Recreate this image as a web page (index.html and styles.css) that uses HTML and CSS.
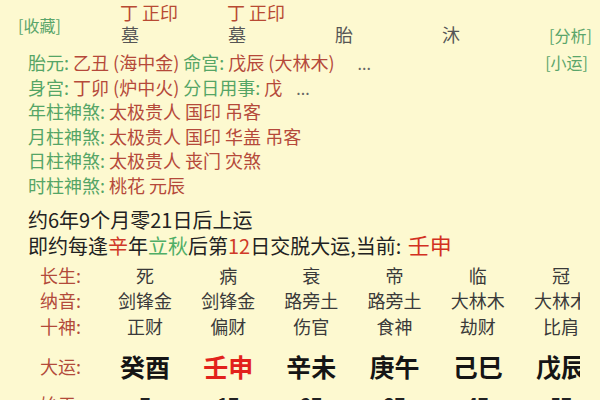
FILE: index.html
```html
<!DOCTYPE html>
<html lang="zh">
<head>
<meta charset="utf-8">
<link rel="stylesheet" href="styles.css">
</head>
<body>
<div class="page">
  <div class="pillars">
    <div class="side fav">[收藏]</div>
    <div class="god">丁 正印</div>
    <div class="god">丁 正印</div>
    <div class="god"></div>
    <div class="god"></div>
    <div class="stage">墓</div>
    <div class="stage">墓</div>
    <div class="stage">胎</div>
    <div class="stage">沐</div>
    <div class="side link">[分析]</div>
  </div>

  <div class="info">
    <div class="row"><span class="side right">[小运]</span><span class="k">胎元: </span><span class="v">乙丑 (海中金) </span><span class="k">命宫: </span><span class="v">戊辰 (大林木)</span><span class="dots d1">...</span></div>
    <div class="row"><span class="k">身宫: </span><span class="v">丁卯 (炉中火) </span><span class="k">分日用事: </span><span class="v">戊</span><span class="dots d2">...</span></div>
    <div class="row"><span class="k">年柱神煞: </span><span class="v">太极贵人 国印 吊客</span></div>
    <div class="row"><span class="k">月柱神煞: </span><span class="v">太极贵人 国印 华盖 吊客</span></div>
    <div class="row"><span class="k">日柱神煞: </span><span class="v">太极贵人 丧门 灾煞</span></div>
    <div class="row"><span class="k">时柱神煞: </span><span class="v">桃花 元辰</span></div>
  </div>

  <div class="luck">
    <div class="line">约6年9个月零21日后上运</div>
    <div class="line">即约每逢<span class="red">辛</span>年<span class="green">立秋</span>后第<span class="red">12</span>日交脱大运,当前: <span class="cur">壬申</span></div>
  </div>

  <div class="table">
    <div class="lbl">长生:</div>
    <div class="cell">死</div><div class="cell">病</div><div class="cell">衰</div><div class="cell">帝</div><div class="cell">临</div><div class="cell">冠</div>
    <div class="lbl">纳音:</div>
    <div class="cell">剑锋金</div><div class="cell">剑锋金</div><div class="cell">路旁土</div><div class="cell">路旁土</div><div class="cell">大林木</div><div class="cell">大林木</div>
    <div class="lbl">十神:</div>
    <div class="cell">正财</div><div class="cell">偏财</div><div class="cell">伤官</div><div class="cell">食神</div><div class="cell">劫财</div><div class="cell">比肩</div>
    <div class="lbl">大运:</div>
    <div class="cell big">癸酉</div><div class="cell big now">壬申</div><div class="cell big">辛未</div><div class="cell big">庚午</div><div class="cell big">己巳</div><div class="cell big">戊辰</div>
    <div class="lbl">始于:</div>
    <div class="cell age">7</div><div class="cell age">17</div><div class="cell age">27</div><div class="cell age">37</div><div class="cell age">47</div><div class="cell age">57</div>
  </div>
</div>
</body>
</html>
```

FILE: styles.css
```css
html, body {
  margin: 0;
  padding: 0;
  background: #fdf9d0;
}
body {
  width: 600px;
  height: 400px;
  overflow: hidden;
  font-family: "Noto Sans CJK SC", "Noto Sans", sans-serif;
  font-size: 18px;
  color: #333;
}
.page {
  width: 600px;
}
.pillars {
  display: grid;
  grid-template-columns: 120px 107px 107px 107px 107px 1fr;
  grid-template-rows: 23px 23px;
  align-items: center;
}
.fav {
  grid-row: 1 / 3;
  grid-column: 1;
  padding-left: 18px;
  align-self: center;
  padding-top: 3px;
}
.side {
  font-size: 16px;
  color: #5aa56a;
}
.link {
  grid-column: 6;
  grid-row: 2;
  padding-left: 1px;
}
.god {
  color: #b84a33;
  grid-row: 1;
  white-space: pre;
  line-height: 22px;
  padding-top: 1px;
}
.stage {
  color: #555;
  grid-row: 2;
  padding-left: 1px;
  line-height: 23px;
}
.info {
  padding-top: 4px;
  padding-left: 28px;
}
.row {
  line-height: 24.6px;
  height: 24.6px;
  white-space: pre;
}
.k { color: #55a566; }
.v { color: #b5493a; }
.dots { color: #666; font-size: 16px; }
.d1 { margin-left: 23px; }
.d2 { margin-left: 14px; }
.right { float: right; margin-right: 12px; }
.luck {
  padding-top: 9px;
  padding-left: 28px;
  font-size: 20px;
  color: #222;
}
.line {
  line-height: 25px;
  height: 25px;
  white-space: nowrap;
}
.red { color: #d03a28; }
.green { color: #4fae66; }
.cur { color: #d2301f; font-size: 22px; padding-left: 2px; }
.table {
  margin-top: 6px;
  width: 580px;
  height: 150px;
  overflow: hidden;
  display: grid;
  grid-template-columns: 103.4px repeat(6, 83.2px);
  grid-template-rows: 25px 25px 27px 52px 24px;
  align-items: center;
}
.lbl {
  padding-left: 40px;
  color: #b24a3a;
}
.cell {
  text-align: center;
  color: #3a3a3a;
  white-space: nowrap;
}
.big {
  font-size: 25px;
  font-weight: bold;
  color: #151515;
}
.now { color: #e2221b; }
.age {
  font-weight: bold;
  color: #222;
}
```
